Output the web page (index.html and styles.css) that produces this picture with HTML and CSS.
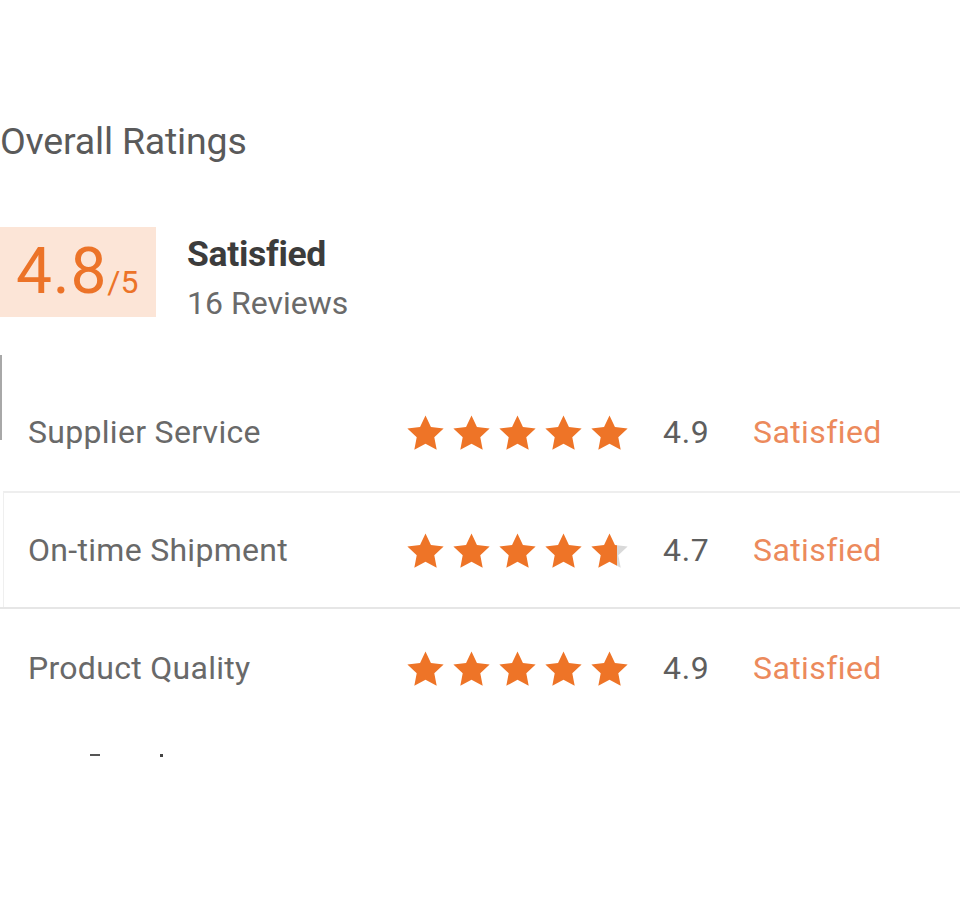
FILE: index.html
```html
<!DOCTYPE html>
<html lang="en">
<head>
<meta charset="utf-8">
<title>Overall Ratings</title>
<link rel="stylesheet" href="styles.css">
</head>
<body>
<svg width="0" height="0" class="defs" aria-hidden="true">
  <defs>
    <path id="star" d="M12 2l2.94 6.26 6.86.83-5.05 4.73 1.3 6.79L12 17.27l-6.05 3.34 1.3-6.79L2.2 9.09l6.86-.83z"/>
    <linearGradient id="partial" x1="0" x2="1" y1="0" y2="0">
      <stop offset="0.72" stop-color="#ee7427"/>
      <stop offset="0.72" stop-color="#d9d9d9"/>
    </linearGradient>
  </defs>
</svg>
<main class="page">
  <h1 class="title">Overall Ratings</h1>

  <section class="summary">
    <div class="score"><span class="score-big">4.8</span><span class="score-small">/5</span></div>
    <div class="summary-text">
      <div class="summary-label">Satisfied</div>
      <div class="summary-count">16 Reviews</div>
    </div>
  </section>

  <section class="ratings">
    <div class="row row-first">
      <div class="label">Supplier Service</div>
      <div class="stars">
        <svg viewBox="2 2 20 19"><use href="#star"/></svg>
        <svg viewBox="2 2 20 19"><use href="#star"/></svg>
        <svg viewBox="2 2 20 19"><use href="#star"/></svg>
        <svg viewBox="2 2 20 19"><use href="#star"/></svg>
        <svg viewBox="2 2 20 19"><use href="#star"/></svg>
      </div>
      <div class="value">4.9</div>
      <div class="status">Satisfied</div>
    </div>
    <div class="row row-second">
      <div class="label">On-time Shipment</div>
      <div class="stars">
        <svg viewBox="2 2 20 19"><use href="#star"/></svg>
        <svg viewBox="2 2 20 19"><use href="#star"/></svg>
        <svg viewBox="2 2 20 19"><use href="#star"/></svg>
        <svg viewBox="2 2 20 19"><use href="#star"/></svg>
        <svg viewBox="2 2 20 19"><use href="#star" class="star-partial"/></svg>
      </div>
      <div class="value">4.7</div>
      <div class="status">Satisfied</div>
    </div>
    <div class="row row-third">
      <div class="label">Product Quality</div>
      <div class="stars">
        <svg viewBox="2 2 20 19"><use href="#star"/></svg>
        <svg viewBox="2 2 20 19"><use href="#star"/></svg>
        <svg viewBox="2 2 20 19"><use href="#star"/></svg>
        <svg viewBox="2 2 20 19"><use href="#star"/></svg>
        <svg viewBox="2 2 20 19"><use href="#star"/></svg>
      </div>
      <div class="value">4.9</div>
      <div class="status">Satisfied</div>
    </div>
  </section>

  <div class="cutoff"><span class="mark-a"></span><span class="mark-b"></span></div>
</main>
</body>
</html>
```

FILE: styles.css
```css
html, body {
  margin: 0;
  padding: 0;
  background: #ffffff;
}

body {
  font-family: Roboto, "Liberation Sans", Arial, sans-serif;
  color: #555;
}

.defs {
  position: absolute;
  width: 0;
  height: 0;
  overflow: hidden;
}

.page {
  width: 960px;
}

.title {
  margin: 0;
  padding-top: 120px;
  font-size: 37.5px;
  line-height: 42px;
  font-weight: 400;
  color: #5a5a5a;
  letter-spacing: -0.2px;
}

.summary {
  display: flex;
  align-items: flex-start;
  margin-top: 65px;
  gap: 31px;
}

.score {
  width: 156px;
  height: 90px;
  box-sizing: border-box;
  background: #fce5d7;
  display: flex;
  align-items: baseline;
  padding-left: 16px;
  padding-top: 4px;
  color: #ec7328;
  line-height: 82px;
}

.score-big {
  font-size: 64px;
  letter-spacing: 0.8px;
}

.score-small {
  font-size: 32px;
}

.summary-text {
  display: flex;
  flex-direction: column;
  padding-top: 6px;
}

.summary-label {
  font-size: 35.5px;
  line-height: 42px;
  font-weight: 700;
  color: #3c3c3c;
  letter-spacing: -0.3px;
}

.summary-count {
  font-size: 32px;
  line-height: 44px;
  color: #6a6a6a;
  margin-top: 6px;
}

.ratings {
  margin-top: 30px;
}

.row {
  display: grid;
  grid-template-columns: 379px 256px 90px auto;
  align-items: center;
  height: 118px;
  padding-left: 28px;
}

.row-first {
  height: 136px;
  box-sizing: border-box;
  padding-top: 18px;
  background-image: linear-gradient(#a8a8a8, #a8a8a8);
  background-repeat: no-repeat;
  background-size: 2px 85px;
  background-position: 0 0;
}

.row-second {
  border-top: 2px solid #eeeeee;
  border-left: 1px solid #efefef;
  margin-left: 3px;
  padding-left: 24px;
  height: 114px;
}

.row-third {
  border-top: 2px solid #e6e6e6;
  height: 118px;
}

.label {
  font-size: 32px;
  color: #696969;
  letter-spacing: 0.3px;
}

.stars {
  display: flex;
  gap: 9px;
  padding-top: 2px;
}

.stars svg {
  width: 37px;
  height: 36px;
  fill: #ee7427;
}

.star-partial {
  fill: url(#partial);
}

.value {
  font-size: 32px;
  color: #5e5e5e;
  letter-spacing: 0.7px;
}

.status {
  font-size: 32px;
  color: #ec8a5c;
  letter-spacing: 0.4px;
}

.cutoff {
  display: flex;
  align-items: flex-start;
  margin-top: 27px;
  padding-left: 90px;
  gap: 60px;
}

.mark-a {
  width: 10px;
  height: 2px;
  background: #555;
}

.mark-b {
  width: 3px;
  height: 3px;
  background: #444;
}
```
